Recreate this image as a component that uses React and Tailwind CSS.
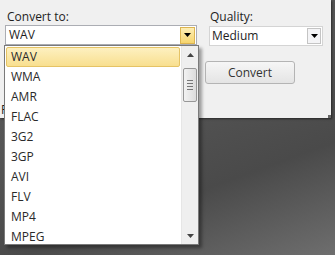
import { useState } from 'react';

const formats = ['WAV', 'WMA', 'AMR', 'FLAC', '3G2', '3GP', 'AVI', 'FLV', 'MP4', 'MPEG'];

function Arrow({ className = '' }) {
  return (
    <svg width="7" height="4" viewBox="0 0 7 4" className={className}>
      <path d="M0 0h7L3.5 4z" fill="currentColor" />
    </svg>
  );
}

export default function App() {
  const [format, setFormat] = useState('WAV');

  return (
    <div
      className="relative w-[335px] h-[255px] overflow-hidden bg-[linear-gradient(160deg,#5a5a5a_0%,#555_40%,#4a4a4a_70%,#6e6e6e_100%)] text-[12px] text-[#1e1e1e]"
      style={{ fontFamily: '"Open Sans", "Noto Sans", sans-serif' }}
    >
      {/* dialog panel */}
      <div className="relative w-[331px] h-[118px] bg-[#f0f0f0] shadow-[1px_1px_2px_rgba(0,0,0,0.5)]">
        <div className="flex gap-3 pl-[5px] pt-[8px]">
          <div className="flex flex-col w-[192px]">
            <span className="pl-[2px] leading-[17px]">Convert to:</span>
            <div className="flex items-center h-[20px] bg-white border border-[#abadb3] pl-[3px] pr-[1px]">
              <span className="flex-1 leading-none">{format}</span>
              <div className="flex items-center justify-center w-[15px] h-[17px] border border-[#dcb451] bg-[linear-gradient(#fdeeb5,#f6d56e)] text-black">
                <Arrow />
              </div>
            </div>
          </div>

          <div className="flex flex-col">
            <span className="pl-[1px] leading-[17px]">Quality:</span>
            <div className="flex items-center w-[114px] h-[20px] bg-white border border-[#d4d4d4] pl-[2px] pr-[1px] mt-[1px]">
              <span className="flex-1 leading-none">Medium</span>
              <div className="flex items-center justify-center w-[14px] h-[16px] border border-[#c4c4c4] bg-[#f4f4f6] text-black">
                <Arrow />
              </div>
            </div>
            <button className="mt-[15px] -ml-[4px] w-[90px] h-[23px] rounded-[3px] border border-[#b4b4b4] bg-[linear-gradient(#f6f6f6,#e4e4e4)] text-[#333] leading-none">
              Convert
            </button>
          </div>
        </div>
        <span className="absolute left-[1px] top-[104px] leading-none">F</span>
        <div className="absolute right-0 bottom-0 w-[3px] h-[3px] bg-[#666]" />
      </div>

      {/* open dropdown list */}
      <div className="absolute left-[4px] top-[45px] w-[195px] h-[200px] flex bg-white border border-[#7a7a7a] shadow-[3px_3px_3px_rgba(0,0,0,0.35)]">
        <ul className="flex-1 py-[1px] pl-[1px]">
          {formats.map((f) => (
            <li
              key={f}
              onClick={() => setFormat(f)}
              className={
                f === format
                  ? 'h-[20px] flex items-center pl-[4px] mr-[1px] rounded-[2px] border border-[#e5c365] bg-[linear-gradient(#fdf0c0,#f8df8f)] text-[#2a2a2a]'
                  : 'h-[20px] flex items-center pl-[5px] text-[#2a2a2a]'
              }
            >
              {f}
            </li>
          ))}
        </ul>
        <div className="w-[17px] flex flex-col items-center bg-[#efefef] border-l border-[#e6e6e6]">
          <div className="h-[17px] flex items-center justify-center text-[#444]">
            <Arrow className="rotate-180" />
          </div>
          <div className="w-[14px] h-[34px] mt-[5px] rounded-[2px] border border-[#979797] bg-[linear-gradient(90deg,#f2f2f2,#dcdcdc)] flex flex-col items-center justify-center gap-[2px]">
            <div className="w-[6px] h-px bg-[#777]" />
            <div className="w-[6px] h-px bg-[#777]" />
            <div className="w-[6px] h-px bg-[#777]" />
            <div className="w-[6px] h-px bg-[#777]" />
          </div>
          <div className="flex-1" />
          <div className="h-[17px] flex items-center justify-center text-[#444]">
            <Arrow />
          </div>
        </div>
      </div>
    </div>
  );
}
